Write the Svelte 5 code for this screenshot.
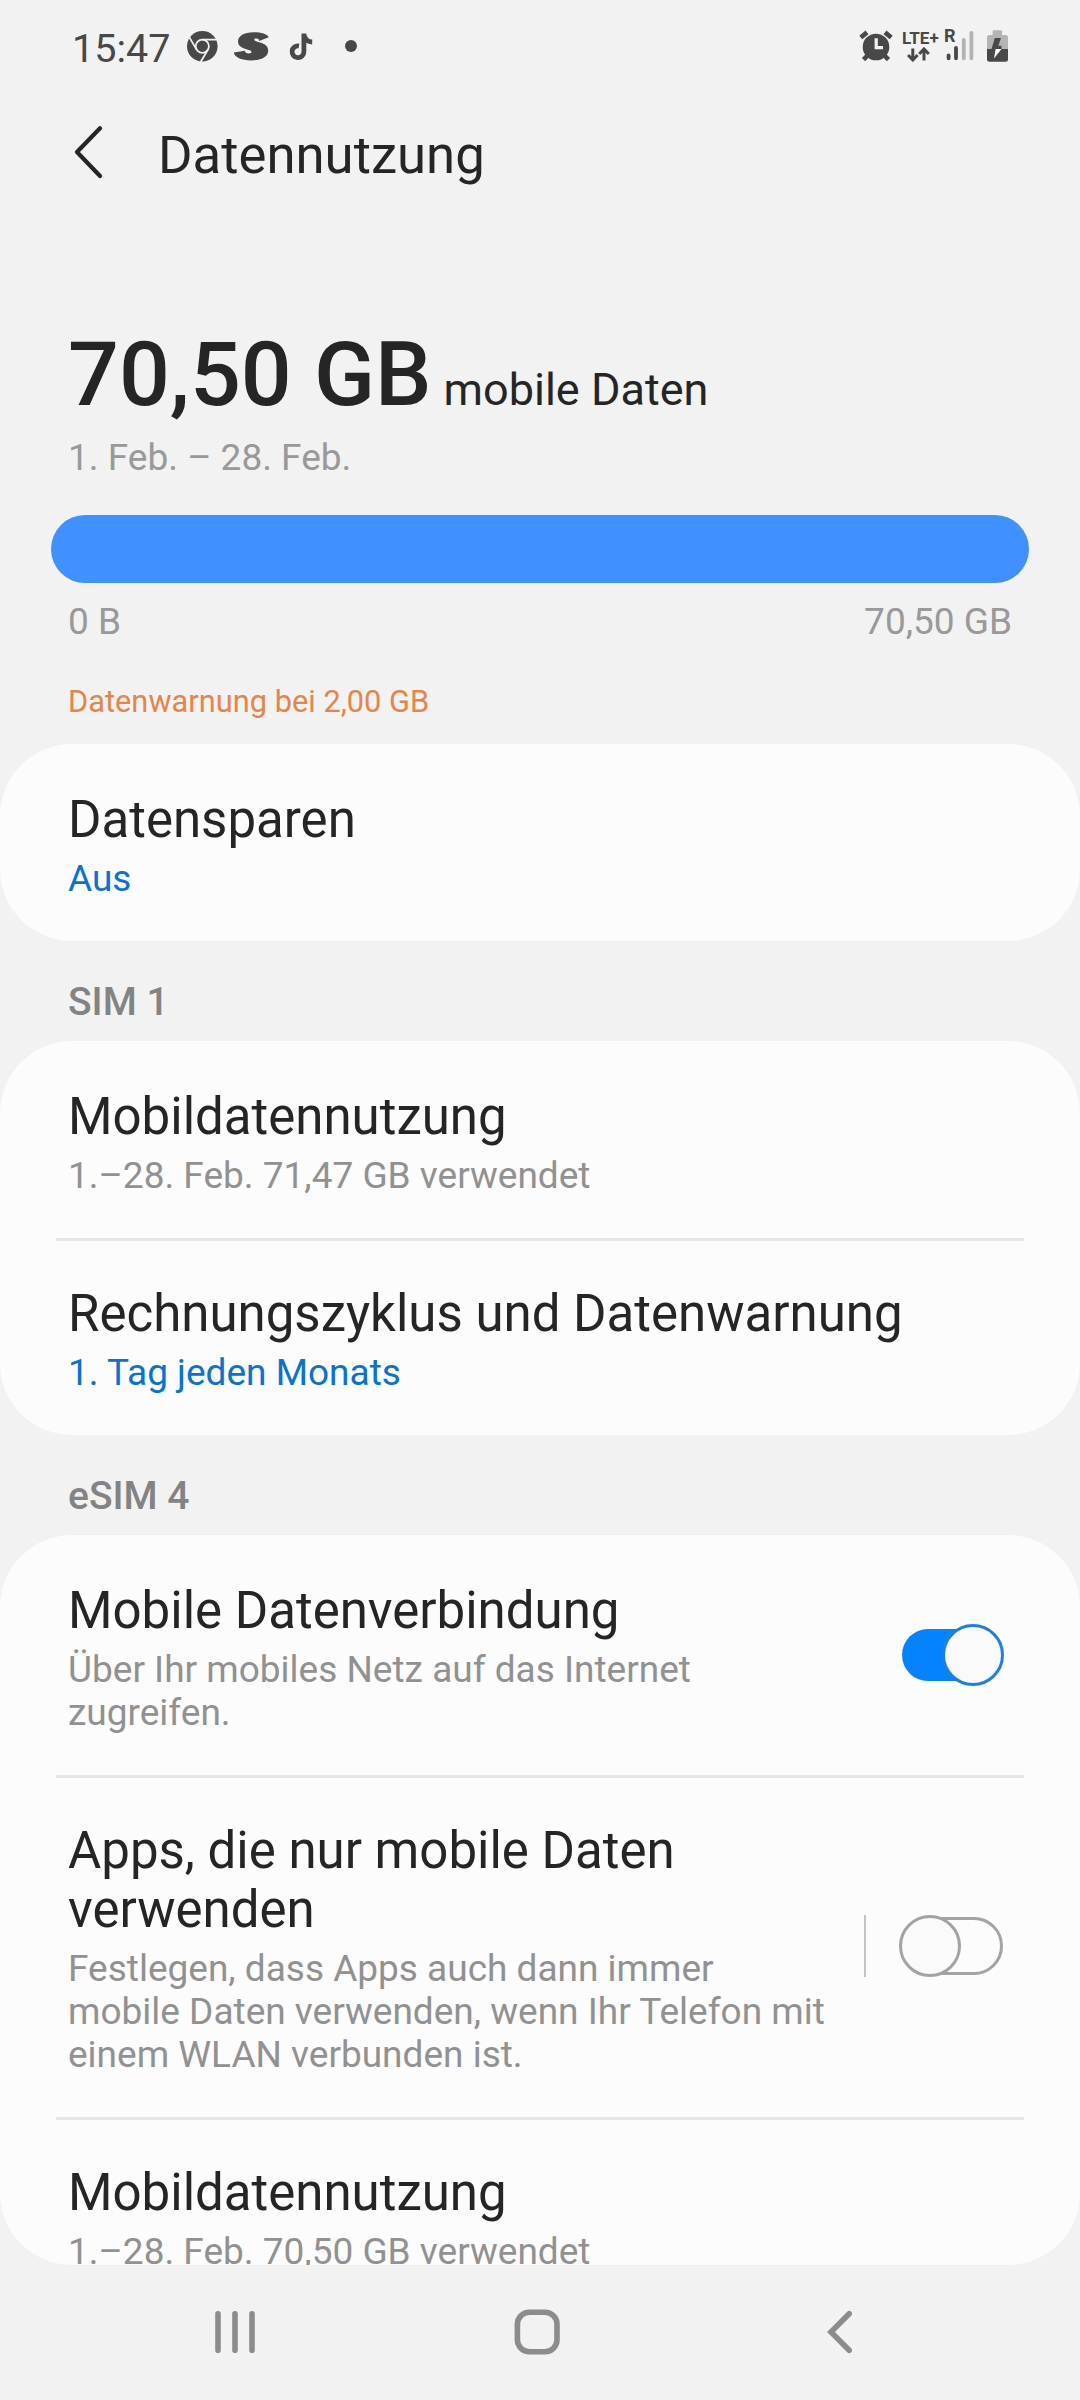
<script>
    const sections = [
        {
            header: "",
            items: [{title: "Datensparen", summary: "Aus", isLink: true}]
        },
        {
            header: "SIM 1",
            items: [
                {title: "Mobildatennutzung", summary: "1.–28. Feb. 71,47 GB verwendet"},
                {title: "Rechnungszyklus und Datenwarnung", summary: "1. Tag jeden Monats", isLink: true}
            ]
        },
        {
            header: "eSIM 4",
            items: [
                {
                    title: "Mobile Datenverbindung",
                    summary: "Über Ihr mobiles Netz auf das Internet\nzugreifen.",
                    toggle: true,
                    checked: true
                },
                {
                    title: "Apps, die nur mobile Daten\nverwenden",
                    summary: "Festlegen, dass Apps auch dann immer\nmobile Daten verwenden, wenn Ihr Telefon mit\neinem WLAN verbunden ist.",
                    toggle: true,
                    checked: false,
                    isSplit: true
                },
                {title: "Mobildatennutzung", summary: "1.–28. Feb. 70,50 GB verwendet"}
            ]
        }
    ]

    const usedPercent = 100

    let checked = $state(sections.map(section => section.items.map(item => !!item.checked)))

    const onToggle = (s, i) => {
        checked[s][i] = !checked[s][i]
    }
</script>

<div class="screen">
  <div class="status-bar">
    <span class="time">15:47</span>
    <svg class="notifications" width="180" height="40" viewBox="180 26 180 40">
      <circle cx="202.3" cy="46.3" r="15.3" fill="#484848"/>
      <g fill="none" stroke="#f2f2f2" stroke-width="1.8">
        <circle cx="202.3" cy="46.3" r="6.6"/>
        <path d="M202.3 39.7H216.5M196.6 49.6L189.4 37.4M208 49.6L200.6 62"/>
      </g>
      <path fill="#484848" d="M268.8 37.2C267 33.8 261 32.2 253.5 32.2C244 32.2 238 36 238 41.5C238 46.5 243 48.5 249.5 50.3C252.5 51.2 252 53.6 249 53.6C246 53.6 244.8 52.2 245 50.8L233.8 52.6C235 58 242 60.4 251 60.4C261.5 60.4 268.2 57 268.2 50.5C268.2 45.5 264 43.4 257.5 41.8C253.8 40.8 253.2 38.6 256 38.4C258.5 38.3 259.2 39.4 259 41Z"/>
      <path fill="none" stroke="#484848" stroke-width="4.8" d="M299 45.9A5.9 5.9 0 1 0 303.9 51.6V33.4M303.9 34C304.5 38.8 307.5 41.8 312.2 42"/>
      <circle cx="351" cy="46" r="6" fill="#484848"/>
    </svg>
    <div class="indicators">
      <svg width="36" height="40" viewBox="857 26 36 40">
        <circle cx="875" cy="47" r="13.3" fill="#484848"/>
        <path fill="none" stroke="#484848" stroke-width="4.6" d="M859.8 37.5L866 32.4M884 32.4L890.2 37.5M866.5 55.5L862.6 59.6M883.5 55.5L887.4 59.6"/>
        <path fill="none" stroke="#f2f2f2" stroke-width="3.2" d="M875.2 38.2V47.6H882"/>
      </svg>
      <div class="network">
        <span class="lte">LTE+</span>
        <svg width="24" height="15" viewBox="906 48 24 15">
          <path fill="none" stroke="#484848" stroke-width="3" d="M911.8 49.5V61M907 56L911.8 61L916.6 56M923 61.5V50M918.2 55L923 50L927.8 55"/>
        </svg>
      </div>
      <div class="signal">
        <span class="roaming">R</span>
        <svg width="32" height="34" viewBox="944 30 32 34">
          <g stroke-width="3.8" stroke-linecap="round">
            <path stroke="#484848" d="M948.6 56.3V59.3M956 49V59.3"/>
            <path stroke="#b2b2b2" d="M963.8 41V59.3M971.4 34V59.3"/>
          </g>
        </svg>
      </div>
      <svg width="24" height="40" viewBox="986 26 24 40">
        <path fill="#b4b4b4" d="M992.6 31.5Q992.6 30.3 993.8 30.3H1000.9Q1002.1 30.3 1002.1 31.5V35H1005.5Q1008 35 1008 37.5V49H987V37.5Q987 35 989.5 35H992.6Z"/>
        <path fill="#484848" d="M987 49H1008V59.3Q1008 61.8 1005.5 61.8H989.5Q987 61.8 987 59.3Z"/>
        <path fill="#484848" d="M994.8 38H1001L998.3 45.8H1001.5V49H991.5Z"/>
        <path fill="#fff" d="M995.6 49H1001.5L994 58.6Z"/>
      </svg>
    </div>
  </div>

  <header>
    <svg width="34" height="56" viewBox="72 124 34 56">
      <path fill="none" stroke="#252525" stroke-width="4.2" stroke-linecap="round" stroke-linejoin="round" d="M100 128.3L77 152L100 176"/>
    </svg>
    <h1>Datennutzung</h1>
  </header>

  <div class="usage">
    <div class="total"><strong>70,50 GB</strong><span>mobile Daten</span></div>
    <div class="period">1. Feb. – 28. Feb.</div>
    <div class="bar">
      <div class="used" style="width: {usedPercent}%"></div>
    </div>
    <div class="range"><span>0 B</span><span>70,50 GB</span></div>
    <div class="warning">Datenwarnung bei 2,00 GB</div>
  </div>

  <main>
    {#each sections as section, s}
      {#if section.header}
        <h2>{section.header}</h2>
      {/if}
      <div class="card">
        {#each section.items as item, i}
          <div class="item">
            <div class="text">
              <div class="title">{item.title}</div>
              <div class="summary" class:link={item.isLink}>{item.summary}</div>
            </div>
            {#if item.isSplit}
              <div class="split"></div>
            {/if}
            {#if item.toggle}
              <button class="toggle" class:on={checked[s][i]} aria-label={item.title} onclick={() => onToggle(s, i)}>
                <span class="track"></span>
                <span class="thumb"></span>
              </button>
            {/if}
          </div>
        {/each}
      </div>
    {/each}
  </main>

  <nav>
    <svg width="60" height="60" viewBox="205 2302 60 60">
      <path fill="none" stroke="#8c8c8c" stroke-width="5.6" stroke-linecap="round" d="M218 2313.8V2350.2M235 2313.8V2350.2M252 2313.8V2350.2"/>
    </svg>
    <svg width="60" height="60" viewBox="507 2302 60 60">
      <rect x="517.4" y="2312.2" width="39.6" height="39.6" rx="12" fill="none" stroke="#8c8c8c" stroke-width="5.6"/>
    </svg>
    <svg width="60" height="60" viewBox="809 2302 60 60">
      <path fill="none" stroke="#8c8c8c" stroke-width="5.6" stroke-linecap="round" d="M849.2 2313.8L831 2332L849.2 2350.2"/>
    </svg>
  </nav>
</div>

<style>
    :global(body) {
        background: #f2f2f2;
    }

    .screen {
        display: flex;
        flex-direction: column;
        width: 1080px;
        height: 2400px;
        overflow: hidden;
        background: #f2f2f2;
        color: #252525;
        font-family: Roboto, sans-serif;
    }

    .status-bar {
        display: flex;
        align-items: center;
        height: 92px;
        padding: 0 70px 0 72px;
        color: #484848;
    }

    .time {
        width: 108px;
        font-size: 39.5px;
        line-height: 40px;
        padding-top: 6px;
    }

    .indicators {
        display: flex;
        align-items: center;
        margin-left: auto;
    }

    .network {
        display: flex;
        flex-direction: column;
        width: 42px;
        padding-left: 8px;
        font-size: 17px;
        font-weight: 700;
        line-height: 16px;
    }

    .lte {
        margin-top: -1px;
    }

    .network svg {
        margin: 1px 0 0 5px;
    }

    .signal {
        position: relative;
        width: 32px;
        height: 34px;
        margin-right: 10px;
    }

    .roaming {
        position: absolute;
        left: 0;
        top: -1px;
        font-size: 18px;
        font-weight: 700;
        line-height: 16px;
    }

    header {
        display: flex;
        align-items: center;
        height: 120px;
        padding-left: 72px;
    }

    h1 {
        margin: 5px 0 0 52px;
        font-size: 52.7px;
        font-weight: 400;
        line-height: 62px;
    }

    .usage {
        height: 532px;
        padding: 0 68px;
        box-sizing: border-box;
    }

    .total {
        height: 105px;
        margin-top: 110px;
        line-height: 105px;
    }

    .total strong {
        font-size: 89.6px;
        font-weight: 500;
    }

    .total span {
        margin-left: 12px;
        font-size: 45px;
    }

    .period {
        margin-top: 9px;
        color: #999;
        font-size: 37px;
        line-height: 43px;
    }

    .bar {
        height: 68px;
        margin: 36px -17px 0;
    }

    .used {
        height: 100%;
        border-radius: 34px;
        background: #4190ff;
    }

    .range {
        display: flex;
        justify-content: space-between;
        margin-top: 17px;
        color: #999;
        font-size: 37px;
        line-height: 43px;
    }

    .warning {
        margin-top: 41px;
        color: #e5854a;
        font-size: 30.8px;
        line-height: 36px;
    }

    main {
        height: 1521px;
        overflow: hidden;
        border-radius: 0 0 72px 72px;
    }

    .card {
        border-radius: 72px;
        background: #fcfcfc;
    }

    .item {
        display: flex;
        align-items: center;
        box-sizing: border-box;
        margin: 0 56px;
        padding: 46px 20px 41px 12px;
    }

    .item + .item {
        padding-top: 43px;
        border-top: 3px solid #e6e6e6;
    }

    .text {
        flex: 1;
        white-space: pre-line;
    }

    .title {
        font-size: 51px;
        line-height: 59px;
    }

    .summary {
        margin-top: 8px;
        color: #919191;
        font-size: 37px;
        line-height: 43px;
    }

    .summary.link {
        color: #0972d3;
    }

    h2 {
        height: 100px;
        margin: 0;
        padding: 39px 68px 0;
        box-sizing: border-box;
        color: #838383;
        font-size: 39px;
        font-weight: 500;
        line-height: 45px;
    }

    .split {
        width: 2px;
        height: 62px;
        margin: -5px 33px 0 0;
        background: #c4c4c4;
    }

    .toggle {
        position: relative;
        width: 105px;
        height: 62px;
        margin-top: -5px;
        padding: 0;
        border: none;
        background: none;
    }

    .track {
        position: absolute;
        box-sizing: border-box;
        top: 2px;
        left: 3px;
        width: 101px;
        height: 58px;
        border: 3px solid #a3a3a3;
        border-radius: 29px;
    }

    .thumb {
        position: absolute;
        box-sizing: border-box;
        top: 0;
        left: 0;
        width: 62px;
        height: 62px;
        border: 3px solid #a3a3a3;
        border-radius: 50%;
        background: #fafafa;
    }

    .toggle.on .track {
        top: 5px;
        height: 52px;
        border: none;
        background: #0583ff;
    }

    .toggle.on .thumb {
        left: 43px;
        border-color: #1a80e8;
    }

    nav {
        display: flex;
        gap: 242px;
        padding: 37px 205px 0;
    }
</style>
